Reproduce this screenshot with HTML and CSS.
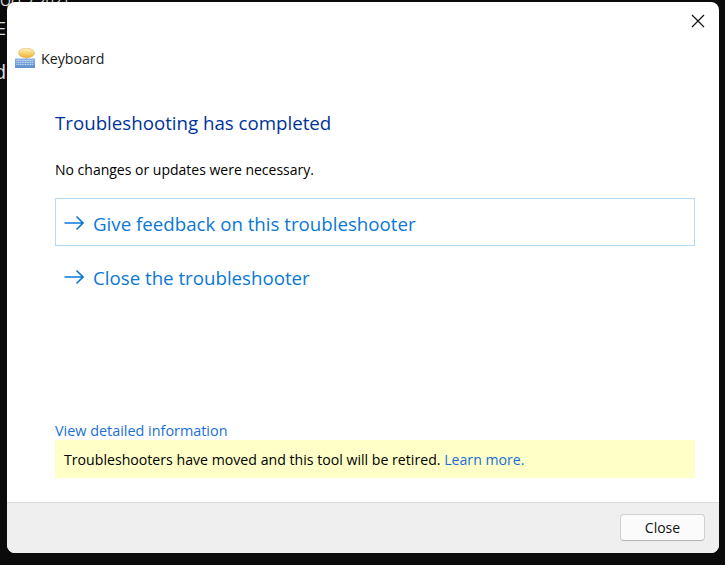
FILE: index.html
```html
<!DOCTYPE html>
<html lang="en">
<head>
<meta charset="utf-8">
<title>Keyboard</title>
<link rel="stylesheet" href="styles.css">
</head>
<body>
<div class="backdrop-text"><span class="frag f1">Oct 7 2021</span><span class="frag f2">E</span><span class="frag f3">d</span></div>
<main class="window">
  <div class="titlebar">
    <svg class="x" width="14" height="14" viewBox="0 0 14 14"><path d="M1 1L13 13M13 1L1 13" stroke="#111" stroke-width="1.2" fill="none"/></svg>
  </div>
  <div class="app-row">
    <svg class="app-icon" width="20" height="20" viewBox="0 0 20 20">
      <defs>
        <linearGradient id="b" x1="0" y1="0" x2="0" y2="1"><stop offset="0" stop-color="#fff4c0"/><stop offset="1" stop-color="#f0b030"/></linearGradient>
        <linearGradient id="k" x1="0" y1="0" x2="0" y2="1"><stop offset="0" stop-color="#8fb4e4"/><stop offset="1" stop-color="#5f8fcc"/></linearGradient>
      </defs>
      <ellipse cx="11.5" cy="5" rx="8" ry="4.8" fill="url(#b)" stroke="#d0a850" stroke-width=".5"/>
      <path d="M10.5 9.5h2v2h-2z" fill="#e0b860"/>
      <path d="M0 10.5h20v9.5h-20z" fill="url(#k)"/>
      <path d="M1.5 12.5h17M1.5 14.5h17M1.5 16.5h17" stroke="#d5e4f7" stroke-width=".9" stroke-dasharray="1 .7"/>
    </svg>
    <span class="app-name">Keyboard</span>
  </div>
  <div class="content">
    <h1 class="heading">Troubleshooting has completed</h1>
    <p class="message">No changes or updates were necessary.</p>
    <a class="cmd cmd-hover" href="#">
      <svg class="arrow" width="20" height="16" viewBox="0 0 20 16"><path d="M0.5 8H19M12.5 1.5L19 8L12.5 14.5" stroke="#0b78d6" stroke-width="1.6" fill="none"/></svg>
      <span>Give feedback on this troubleshooter</span>
    </a>
    <a class="cmd" href="#">
      <svg class="arrow" width="20" height="16" viewBox="0 0 20 16"><path d="M0.5 8H19M12.5 1.5L19 8L12.5 14.5" stroke="#0b78d6" stroke-width="1.6" fill="none"/></svg>
      <span>Close the troubleshooter</span>
    </a>
    <div class="spacer"></div>
    <a class="details" href="#">View detailed information</a>
    <div class="notice">Troubleshooters have moved and this tool will be retired. <a href="#">Learn more.</a></div>
  </div>
  <div class="footer"><button class="close-btn" type="button">Close</button></div>
</main>
</body>
</html>
```
FILE: styles.css
```css
* { box-sizing: border-box; }
html, body { height: 100%; }
body {
  margin: 0;
  background: #0b0b0b;
  font-family: "Open Sans", "Noto Sans", "Liberation Sans", sans-serif;
  padding: 2px 6px 12px 7px;
  height: 565px;
  overflow: hidden;
  position: relative;
}
.backdrop-text { position: absolute; left: 0; top: -9px; color: #ddd; font-size: 14px; }
.frag { position: absolute; white-space: nowrap; }
.f1 { left: 0; top: 0; }
.f2 { left: -4px; top: 25px; font-size: 18px; line-height: 24px; }
.f3 { left: -6px; top: 68px; font-size: 20px; line-height: 26px; }
.window {
  position: relative;
  height: 551px;
  background: #fff;
  border-radius: 8px;
  display: flex;
  flex-direction: column;
  overflow: hidden;
}
.titlebar { height: 36px; display: flex; justify-content: flex-end; align-items: flex-start; padding: 12px 14px 0 0; flex: none; }
.app-row { display: flex; align-items: center; gap: 6px; padding: 10px 0 0 8px; height: 30px; flex: none; font-size: 14.2px; color: #1a1a1a; }
.content { flex: 1; display: flex; flex-direction: column; padding: 0 24px 0 48px; min-height: 0; }
.heading { margin: 42px 0 0; font-size: 18.7px; line-height: 26px; font-weight: 400; color: #003399; }
.message { margin: 24px 0 0; font-size: 14px; line-height: 20px; color: #000; }
.cmd { display: flex; align-items: center; gap: 9px; height: 48px; padding: 2px 0 0 8px; border: 1px solid transparent; color: #0b78d6; font-size: 18.7px; text-decoration: none; }
.cmd-hover { margin-top: 18px; border-color: #b5dcf5; margin-bottom: 6px; }
.spacer { flex: 1; }
.details { color: #1a6fd6; font-size: 14.4px; line-height: 18px; text-decoration: none; }
.notice { background: #ffffc8; height: 38px; margin-bottom: 24px; padding-left: 9px; display: flex; align-items: center; white-space: pre-wrap; font-size: 14.15px; color: #000; }
.notice a { color: #1a6fd6; text-decoration: none; }
.footer { flex: none; height: 51px; background: #efefef; border-top: 1px solid #dcdcdc; display: flex; justify-content: flex-end; align-items: flex-start; padding: 11px 14px 0 0; }
.close-btn { width: 85px; height: 27px; background: #fbfbfb; border: 1px solid #d0d0d0; border-bottom-color: #b5b5b5; border-radius: 4px; font: inherit; font-size: 14px; color: #111; padding: 0; }
```
